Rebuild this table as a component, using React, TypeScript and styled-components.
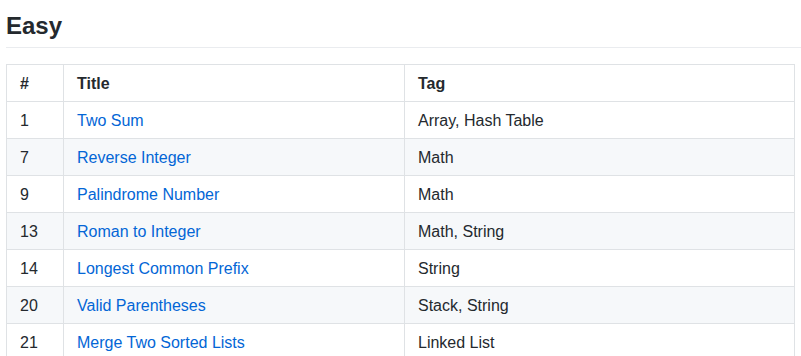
import React from "react";
import styled, { createGlobalStyle } from "styled-components";

const GlobalStyle = createGlobalStyle`
  html, body {
    margin: 0;
    padding: 0;
    background: #ffffff;
    overflow: hidden;
  }
  body {
    font-family: "Liberation Sans", Arial, sans-serif;
    color: #24292e;
    font-size: 16px;
    line-height: 1.5;
  }
`;

const Page = styled.article`
  padding: 11px 0 0 6px;
`;

const Heading = styled.h2`
  margin: 0 0 16px;
  padding-bottom: 6px;
  font-size: 24px;
  font-weight: 600;
  line-height: 30px;
  border-bottom: 1px solid #eaecef;
`;

const Table = styled.table`
  width: 788px;
  border-collapse: collapse;
  border-spacing: 0;
  table-layout: fixed;
`;

const Row = styled.tr<{ $striped?: boolean }>`
  background-color: ${(p) => (p.$striped ? "#f6f8fa" : "#ffffff")};
`;

const HeadCell = styled.th`
  padding: 7px 13px 5px;
  border: 1px solid #dfe2e5;
  font-weight: 600;
  text-align: left;
`;

const Cell = styled.td`
  padding: 7px 13px 5px;
  border: 1px solid #dfe2e5;
  white-space: nowrap;
`;

const Link = styled.a`
  color: #0366d6;
  text-decoration: none;
`;

interface Problem {
  id: number;
  title: string;
  tags: string;
}

const problems: Problem[] = [
  { id: 1, title: "Two Sum", tags: "Array, Hash Table" },
  { id: 7, title: "Reverse Integer", tags: "Math" },
  { id: 9, title: "Palindrome Number", tags: "Math" },
  { id: 13, title: "Roman to Integer", tags: "Math, String" },
  { id: 14, title: "Longest Common Prefix", tags: "String" },
  { id: 20, title: "Valid Parentheses", tags: "Stack, String" },
  { id: 21, title: "Merge Two Sorted Lists", tags: "Linked List" },
];

export default function App() {
  return (
    <Page>
      <GlobalStyle />
      <Heading>Easy</Heading>
      <Table>
        <colgroup>
          <col style={{ width: 57 }} />
          <col style={{ width: 341 }} />
          <col style={{ width: 390 }} />
        </colgroup>
        <thead>
          <Row>
            <HeadCell>#</HeadCell>
            <HeadCell>Title</HeadCell>
            <HeadCell>Tag</HeadCell>
          </Row>
        </thead>
        <tbody>
          {problems.map((p, i) => (
            <Row key={p.id} $striped={i % 2 === 1}>
              <Cell>{p.id}</Cell>
              <Cell>
                <Link href="#">{p.title}</Link>
              </Cell>
              <Cell>{p.tags}</Cell>
            </Row>
          ))}
        </tbody>
      </Table>
    </Page>
  );
}
